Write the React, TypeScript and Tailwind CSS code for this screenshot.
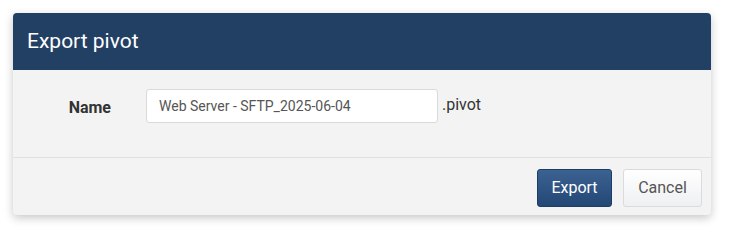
export default function App() {
  return (
    <div className="w-[732px] h-[237px] bg-white pt-[13px] pl-[13px] font-['Roboto',sans-serif]">
      <div className="w-[698px] rounded-[4px] bg-[#f2f3f2] shadow-[0_3px_10px_rgba(0,0,0,0.22)] overflow-hidden">
        <div className="h-[57px] bg-[#223f64] flex items-center px-[14px]">
          <h2 className="text-[21px] text-white">Export pivot</h2>
        </div>
        <div className="h-[88px] pt-[19px] flex items-start border-b border-[#dfe1df]">
          <label className="w-[98px] h-[34px] leading-[38px] text-right text-[16px] font-bold text-[#333]">Name</label>
          <input
            readOnly
            value="Web Server - SFTP_2025-06-04"
            className="ml-[35px] w-[292px] h-[34px] bg-white border border-[#d9d9d9] rounded-[3px] px-[12px] text-[14px] text-[#555] outline-none"
          />
          <span className="ml-[4px] h-[34px] leading-[32px] text-[16px] text-[#333]">.pivot</span>
        </div>
        <div className="h-[57px] pt-[11px] flex items-start justify-end gap-[11px] pr-[9px]">
          <button className="h-[38px] w-[75px] rounded-[3px] border border-[#1d3d64] bg-gradient-to-b from-[#3c6292] to-[#234876] text-[16px] text-white">
            Export
          </button>
          <button className="h-[38px] w-[79px] rounded-[3px] border border-[#d9dbdd] bg-gradient-to-b from-white to-[#eef0f2] text-[16px] text-[#555]">
            Cancel
          </button>
        </div>
      </div>
    </div>
  )
}
